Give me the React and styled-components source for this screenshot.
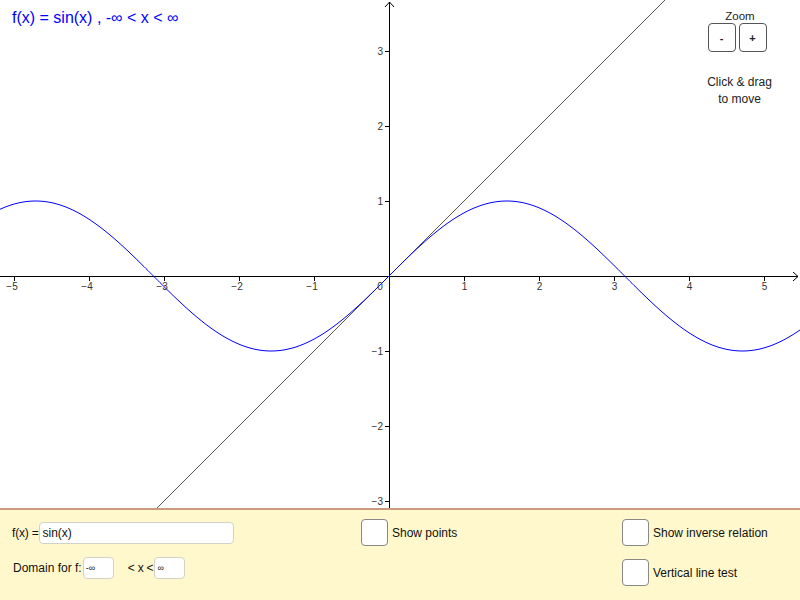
import React from "react";
import styled, { createGlobalStyle } from "styled-components";

const W = 800;
const H = 508;
const OX = 389;
const OY = 276;
const U = 75;

const GlobalStyle = createGlobalStyle`
  html, body { margin: 0; padding: 0; background: #fff; }
  body { font-family: "Liberation Sans", Arial, sans-serif; }
`;

const Page = styled.div`
  width: 800px;
  height: 600px;
  display: flex;
  flex-direction: column;
  overflow: hidden;
  font-family: "Liberation Sans", Arial, sans-serif;
`;

const GraphArea = styled.div`
  position: relative;
  height: ${H}px;
  flex-shrink: 0;
  background: #fff;
`;

const Title = styled.div`
  position: absolute;
  left: 12px;
  top: 9px;
  color: #0000ff;
  font-size: 16px;
  white-space: pre;
`;

const ZoomBox = styled.div`
  position: absolute;
  left: 700px;
  top: 10px;
  width: 80px;
  display: flex;
  flex-direction: column;
  align-items: center;
  font-size: 11.5px;
  color: #222;
`;

const ZoomRow = styled.div`
  display: flex;
  gap: 3px;
  margin-top: 1px;
  margin-left: -6px;
`;

const ZoomButton = styled.div`
  width: 26px;
  height: 27px;
  border: 1.5px solid #555;
  border-radius: 4px;
  display: flex;
  align-items: center;
  justify-content: center;
  font-size: 11px;
  font-weight: bold;
  background: #fff;
`;

const Hint = styled.div`
  margin-top: 22px;
  text-align: center;
  line-height: 17px;
  font-size: 12px;
  margin-left: -1px;
`;

const Panel = styled.div`
  flex: 1;
  background: #fff8cd;
  border-top: 2px solid #c99a7d;
  display: flex;
  padding: 9px 0 0 12px;
  font-size: 12px;
  color: #111;
`;

const Column = styled.div`
  width: ${(p) => p.width || "auto"};
  display: flex;
  flex-direction: column;
  gap: ${(p) => p.gap || "12px"};
  padding-top: ${(p) => p.pt || "0px"};
`;

const Row = styled.div`
  display: flex;
  align-items: center;
  gap: ${(p) => p.gap || "1px"};
`;

const TextInput = styled.div`
  width: ${(p) => p.width};
  height: 22px;
  box-sizing: border-box;
  background: #fff;
  border: 1px solid #d2d2c8;
  border-radius: 4px;
  padding: 0 2px;
  display: flex;
  align-items: center;
  font-size: ${(p) => (p.small ? "9px" : "12px")};
`;

const Check = styled.div`
  width: 27px;
  height: 27px;
  box-sizing: border-box;
  border: 1.5px solid #888;
  border-radius: 4px;
  background: #fff;
`;

const Label = styled.span`
  margin-left: ${(p) => p.indent || 0}px;
  letter-spacing: ${(p) => (p.tight ? "-0.2px" : "0")};
`;

function Graph() {
  const pts = [];
  for (let px = 0; px <= W; px += 2) {
    const x = (px - OX) / U;
    pts.push(`${px},${(OY - U * Math.sin(x)).toFixed(2)}`);
  }
  const xs = [-5, -4, -3, -2, -1, 1, 2, 3, 4, 5];
  const ys = [3, 2, 1, -1, -2, -3];
  const minus = (n) => (n < 0 ? "\u2212" + Math.abs(n) : String(n));
  return (
    <svg width={W} height={H} style={{ display: "block" }}>
      <g stroke="#000" strokeWidth="1" fill="none">
        <line x1="0" y1={OY + 0.5} x2={W - 2} y2={OY + 0.5} />
        <polyline points={`${W - 7},${OY - 4} ${W - 2},${OY + 0.5} ${W - 7},${OY + 5}`} />
        <line x1={OX + 0.5} y1="2" x2={OX + 0.5} y2={H} />
        <polyline points={`${OX - 4},7 ${OX + 0.5},2 ${OX + 5},7`} />
        {xs.map((n) => (
          <line key={n} x1={OX + n * U + 0.5} y1={OY} x2={OX + n * U + 0.5} y2={OY + 5} />
        ))}
        {ys.map((n) => (
          <line key={n} x1={OX - 4} y1={OY - n * U + 0.5} x2={OX} y2={OY - n * U + 0.5} />
        ))}
      </g>
      <line x1={OX - 232} y1={H} x2={OX + 276} y2="0" stroke="#444" strokeWidth="0.9" />
      <polyline points={pts.join(" ")} fill="none" stroke="#0000ff" strokeWidth="1" />
      <g fontFamily="Liberation Sans, Arial, sans-serif" fontSize="10" fill="#333">
        {xs.map((n) => (
          <text key={n} x={OX + n * U + (n < 0 ? -2 : 0.5)} y={OY + 14} textAnchor="middle">
            {minus(n)}
          </text>
        ))}
        <text x={OX - 9} y={OY + 14} textAnchor="middle">0</text>
        {ys.map((n) => (
          <text key={n} x={OX - 6} y={OY - n * U + 4} textAnchor="end">
            {minus(n)}
          </text>
        ))}
      </g>
    </svg>
  );
}

export default function App() {
  return (
    <Page>
      <GlobalStyle />
      <GraphArea>
        <Graph />
        <Title>f(x) = sin(x) , -∞ &lt; x &lt; ∞</Title>
        <ZoomBox>
          <div>Zoom</div>
          <ZoomRow>
            <ZoomButton>-</ZoomButton>
            <ZoomButton>+</ZoomButton>
          </ZoomRow>
          <Hint>
            Click &amp; drag
            <br />
            to move
          </Hint>
        </ZoomBox>
      </GraphArea>
      <Panel>
        <Column width="349px" gap="13px" pt="3px">
          <Row>
            <Label tight>f(x) =</Label>
            <TextInput width="195px">sin(x)</TextInput>
          </Row>
          <Row>
            <Label indent={1}>Domain for f:</Label>
            <TextInput width="31px" small>-∞</TextInput>
            <Label indent={13} tight>&lt; x &lt;</Label>
            <TextInput width="31px" small>∞</TextInput>
          </Row>
        </Column>
        <Column width="261px">
          <Row gap="4px">
            <Check />
            <span>Show points</span>
          </Row>
        </Column>
        <Column gap="13px">
          <Row gap="4px">
            <Check />
            <span>Show inverse relation</span>
          </Row>
          <Row gap="4px">
            <Check />
            <span>Vertical line test</span>
          </Row>
        </Column>
      </Panel>
    </Page>
  );
}
